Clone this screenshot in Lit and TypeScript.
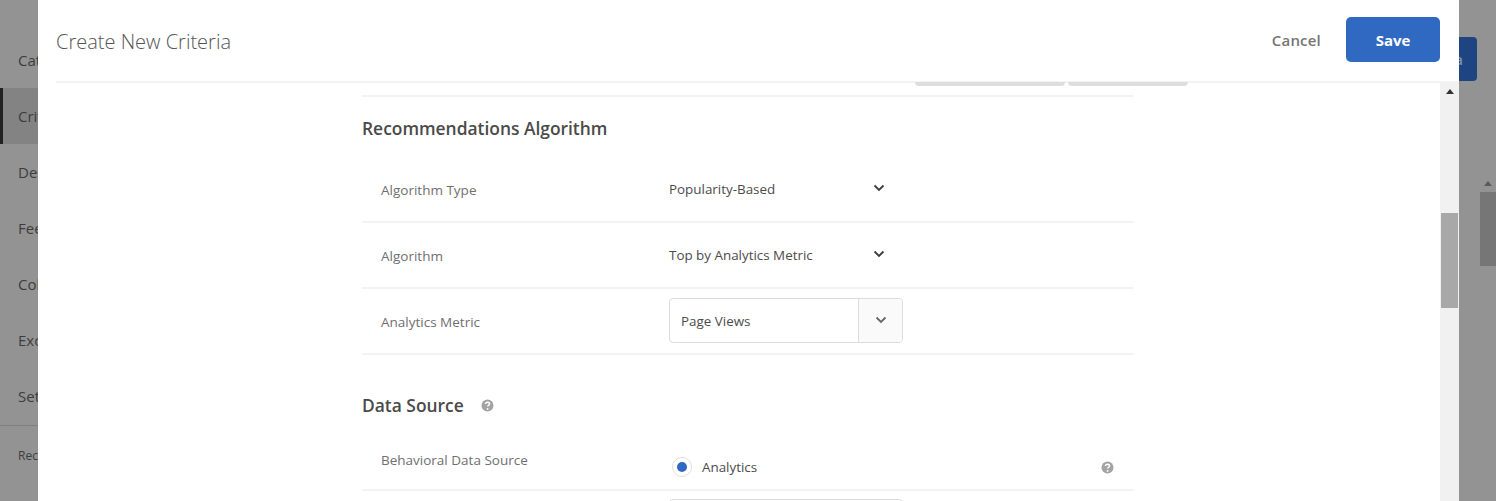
import { LitElement, html, css } from 'lit';
import { customElement } from 'lit/decorators.js';

const chevron = (cls: string) => html`<svg class=${cls} width="12" height="8" viewBox="0 0 12 8" fill="none"><path d="M1.5 1.5 6 6l4.5-4.5" stroke="currentColor" stroke-width="1.8"/></svg>`;

const help = html`<svg class="help" width="13" height="13" viewBox="0 0 13 13"><circle cx="6.5" cy="6.5" r="6" fill="#a3a3a3"/><path d="M4.5 5.1c0-1.2.9-1.9 2-1.9s2 .7 2 1.7c0 1.5-1.9 1.4-1.9 2.7" fill="none" stroke="#fff" stroke-width="1.5"/><circle cx="6.6" cy="9.9" r=".95" fill="#fff"/></svg>`;

@customElement('app-root')
export class AppRoot extends LitElement {
  static styles = css`
    :host {
      display: block;
      position: relative;
      width: 1496px;
      height: 501px;
      overflow: hidden;
      background: #939393;
      font-family: 'Open Sans', 'Noto Sans', sans-serif;
    }

    /* page behind the dialog */
    .backdrop {
      display: flex;
      height: 100%;
    }

    .sidebar {
      width: 38px;
      padding-top: 32px;
      flex: none;
      font-size: 15px;
      color: #3d3d3d;
      white-space: nowrap;
    }

    .side-item {
      height: 56px;
      line-height: 56px;
      padding-left: 18px;
      box-sizing: border-box;
    }

    .side-item.active {
      background: #838383;
      border-left: 3px solid #222;
      padding-left: 15px;
    }

    .side-recent {
      margin-top: 1px;
      border-top: 1px solid #7f7f7f;
      padding: 21px 0 0 18px;
      font-size: 12px;
    }

    .page {
      flex: 1;
      display: flex;
      justify-content: flex-end;
      padding: 37px 19px 0 0;
      position: relative;
    }

    .page-btn {
      width: 60px;
      height: 44px;
      border-radius: 4px;
      background: #1e4581;
      color: #7f92ae;
      font-size: 15px;
      font-weight: 600;
      line-height: 44px;
      text-align: right;
      padding-right: 14px;
      box-sizing: border-box;
    }

    .page-scroll {
      position: absolute;
      right: 0;
      top: 178px;
      width: 18px;
      display: flex;
      flex-direction: column;
      align-items: center;
      gap: 6px;
      padding-left: 1px;
      box-sizing: border-box;
    }

    .page-arrow {
      width: 0;
      height: 0;
      border: 4px solid transparent;
      border-top: 0;
      border-bottom: 5px solid #5a5a5a;
      margin-top: 3px;
    }

    .page-thumb {
      width: 16px;
      height: 74px;
      background: #767676;
    }

    /* dialog */
    .modal {
      position: absolute;
      left: 38px;
      top: -6px;
      width: 1421px;
      height: 520px;
      display: flex;
      flex-direction: column;
      background: #fff;
      border-radius: 6px;
      overflow: hidden;
    }

    .header {
      flex: none;
      height: 89px;
      margin-left: 18px;
      padding-top: 4px;
      padding-right: 19px;
      box-sizing: border-box;
      border-bottom: 2px solid #f3f3f3;
      display: flex;
      align-items: center;
    }

    .title {
      flex: 1;
      margin-top: 4px;
      font-size: 20px;
      font-weight: 300;
      color: #555;
    }

    .cancel {
      font-size: 15px;
      font-weight: 600;
      color: #757575;
      margin-right: 25px;
      letter-spacing: 0.2px;
    }

    .save {
      width: 94px;
      height: 45px;
      border-radius: 5px;
      background: #2f69c2;
      color: #fff;
      font-size: 15px;
      font-weight: 700;
      display: flex;
      align-items: center;
      justify-content: center;
    }

    .scroller {
      flex: 1;
      display: flex;
      min-height: 0;
    }

    .body {
      flex: 1;
      padding-left: 324px;
    }

    .content {
      width: 771px;
    }

    .tabs {
      display: flex;
      gap: 3px;
      height: 13px;
      margin-left: 553px;
      margin-right: -55px;
      margin-top: -1px;
    }

    .tab {
      height: 4px;
      background: #dedede;
      border-radius: 0 0 5px 5px;
    }

    .tab.one { width: 150px; }
    .tab.two { width: 120px; }

    .section {
      border-top: 2px solid #f3f3f3;
    }

    h2 {
      margin: 0;
      display: flex;
      align-items: center;
      gap: 17px;
      font-size: 17.4px;
      font-weight: 600;
      color: #4a4a4a;
      box-sizing: border-box;
    }

    .section h2 {
      height: 60px;
      padding-top: 2px;
    }

    h2.data {
      height: 88px;
      padding-top: 12px;
    }

    .row {
      display: grid;
      grid-template-columns: 288px 1fr;
      align-items: center;
      height: 66px;
      padding-left: 19px;
      box-sizing: border-box;
      border-bottom: 2px solid #f3f3f3;
      font-size: 13.4px;
    }

    .row.tall {
      height: 48px;
      align-items: start;
    }

    .label {
      color: #6f6f6f;
      font-size: 13.5px;
      padding-top: 1px;
    }

    .row.tall .label {
      padding-top: 8px;
    }

    .value {
      color: #4b4b4b;
    }

    .plain {
      width: 216px;
      display: flex;
      justify-content: space-between;
      align-items: center;
      margin-top: -1px;
    }

    .chev {
      color: #3c3c3c;
      margin-top: -2px;
    }

    .combo {
      width: 234px;
      height: 45px;
      margin-top: -2px;
      display: flex;
      border: 1px solid #dcdcdc;
      border-radius: 4px;
      box-sizing: border-box;
      overflow: hidden;
    }

    .combo-text {
      flex: 1;
      padding: 1px 0 0 11px;
      line-height: 43px;
      color: #4b4b4b;
    }

    .combo-btn {
      width: 43px;
      background: #fafafa;
      border-left: 1px solid #dcdcdc;
      display: flex;
      align-items: center;
      justify-content: center;
      color: #666;
    }

    .radio-wrap {
      display: flex;
      justify-content: space-between;
      align-items: center;
      padding-right: 19px;
      margin-top: 14px;
    }

    .radio-row {
      display: flex;
      align-items: center;
      padding-left: 3px;
      gap: 10px;
    }

    .radio {
      width: 20px;
      height: 20px;
      border-radius: 50%;
      border: 1px solid #dedede;
      box-sizing: border-box;
      display: flex;
      align-items: center;
      justify-content: center;
    }

    .radio i {
      width: 10px;
      height: 10px;
      border-radius: 50%;
      background: #2f69c2;
    }

    .next {
      margin-left: 307px;
      margin-top: 8px;
      width: 234px;
      height: 20px;
      border: 1px solid #dcdcdc;
      border-radius: 4px;
      box-sizing: border-box;
    }

    .vscroll {
      flex: none;
      width: 19px;
      background: #f1f1f1;
      display: flex;
      flex-direction: column;
      align-items: center;
    }

    .v-arrow {
      width: 0;
      height: 0;
      margin-top: 6px;
      border: 4px solid transparent;
      border-top: 0;
      border-bottom: 5px solid #333;
    }

    .v-thumb {
      width: 17px;
      height: 95px;
      margin-top: 119px;
      background: #a8a8a8;
    }
  `;

  render() {
    return html`
      <div class="backdrop">
        <div class="sidebar">
          <div class="side-item">Catalogs</div>
          <div class="side-item active">Criteria</div>
          <div class="side-item">Designs</div>
          <div class="side-item">Feeds</div>
          <div class="side-item">Collections</div>
          <div class="side-item">Exclusions</div>
          <div class="side-item">Settings</div>
          <div class="side-recent">Recs</div>
        </div>
        <div class="page">
          <div class="page-btn">a</div>
          <div class="page-scroll">
            <div class="page-arrow"></div>
            <div class="page-thumb"></div>
          </div>
        </div>
      </div>

      <div class="modal">
        <div class="header">
          <div class="title">Create New Criteria</div>
          <div class="cancel">Cancel</div>
          <div class="save">Save</div>
        </div>
        <div class="scroller">
          <div class="body">
            <div class="content">
              <div class="tabs">
                <div class="tab one"></div>
                <div class="tab two"></div>
              </div>
              <div class="section">
                <h2>Recommendations Algorithm</h2>
                <div class="row">
                  <div class="label">Algorithm Type</div>
                  <div class="value plain">Popularity-Based ${chevron('chev')}</div>
                </div>
                <div class="row">
                  <div class="label">Algorithm</div>
                  <div class="value plain">Top by Analytics Metric ${chevron('chev')}</div>
                </div>
                <div class="row">
                  <div class="label">Analytics Metric</div>
                  <div class="combo">
                    <div class="combo-text">Page Views</div>
                    <div class="combo-btn">${chevron('')}</div>
                  </div>
                </div>
              </div>
              <h2 class="data">Data Source ${help}</h2>
              <div class="row tall">
                <div class="label">Behavioral Data Source</div>
                <div class="radio-wrap">
                  <div class="radio-row value">
                    <div class="radio"><i></i></div>
                    Analytics
                  </div>
                  ${help}
                </div>
              </div>
              <div class="next"></div>
            </div>
          </div>
          <div class="vscroll">
            <div class="v-arrow"></div>
            <div class="v-thumb"></div>
          </div>
        </div>
      </div>
    `;
  }
}
